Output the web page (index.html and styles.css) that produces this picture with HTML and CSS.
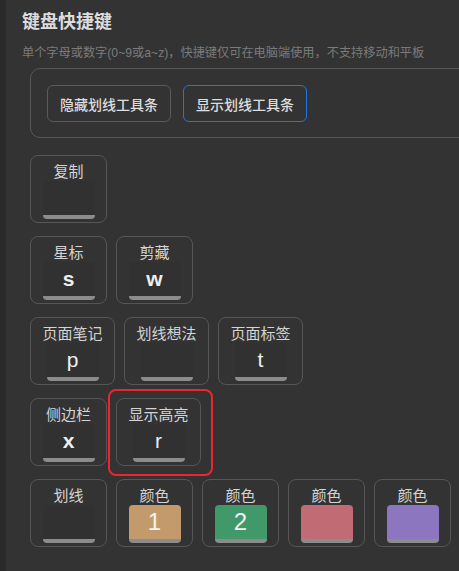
FILE: index.html
```html
<!DOCTYPE html>
<html lang="zh-CN">
<head>
  <meta charset="UTF-8">
  <meta name="viewport" content="width=device-width, initial-scale=1.0">
  <title>键盘快捷键</title>
  <link rel="stylesheet" href="styles.css">
</head>
<body>
  <div class="panel">
    <h2 class="title">键盘快捷键</h2>
    <p class="desc">单个字母或数字(0~9或a~z)，快捷键仅可在电脑端使用，不支持移动和平板</p>

    <div class="toolbar-box">
      <button class="toggle">隐藏划线工具条</button>
      <button class="toggle active">显示划线工具条</button>
    </div>

    <div class="rows">
      <div class="row">
        <div class="key-card">
          <span class="label">复制</span>
          <span class="keycap"></span>
        </div>
      </div>
      <div class="row">
        <div class="key-card">
          <span class="label">星标</span>
          <span class="keycap bold">s</span>
        </div>
        <div class="key-card">
          <span class="label">剪藏</span>
          <span class="keycap bold">w</span>
        </div>
      </div>
      <div class="row">
        <div class="key-card">
          <span class="label">页面笔记</span>
          <span class="keycap">p</span>
        </div>
        <div class="key-card">
          <span class="label">划线想法</span>
          <span class="keycap"></span>
        </div>
        <div class="key-card">
          <span class="label">页面标签</span>
          <span class="keycap">t</span>
        </div>
      </div>
      <div class="row">
        <div class="key-card">
          <span class="label">侧边栏</span>
          <span class="keycap bold">x</span>
        </div>
        <div class="key-card marked">
          <span class="label">显示高亮</span>
          <span class="keycap">r</span>
        </div>
      </div>
      <div class="row">
        <div class="key-card">
          <span class="label">划线</span>
          <span class="keycap"></span>
        </div>
        <div class="key-card">
          <span class="label">颜色</span>
          <span class="keycap color tan">1</span>
        </div>
        <div class="key-card">
          <span class="label">颜色</span>
          <span class="keycap color green">2</span>
        </div>
        <div class="key-card">
          <span class="label">颜色</span>
          <span class="keycap color rose"></span>
        </div>
        <div class="key-card">
          <span class="label">颜色</span>
          <span class="keycap color purple"></span>
        </div>
      </div>
    </div>
  </div>
</body>
</html>
```

FILE: styles.css
```css
*{
  margin: 0;
  padding: 0;
  box-sizing: border-box;
}
html, body{
  height: 100%;
}
body{
  background-color: #333333;
  border-left: 6px solid #2a2a2a;
  overflow: hidden;
  font-family: "Liberation Sans", "Noto Sans CJK SC", sans-serif;
  color: #d6d6d6;
}
.panel{
  padding: 10px 0 0 16px;
}
.title{
  font-size: 18px;
  line-height: 25px;
  font-weight: bold;
  color: #dcdcdc;
}
.desc{
  margin-top: 9px;
  font-size: 12.2px;
  line-height: 18px;
  color: #7b7b7b;
  white-space: nowrap;
}
.toolbar-box{
  display: flex;
  gap: 12px;
  width: 460px;
  margin: 6px 0 0 8px;
  padding: 16px 16px 15px;
  border: 1px solid #575757;
  border-radius: 10px;
}
.toggle{
  height: 37px;
  padding: 0 12px;
  border: 1px solid #5a5a5a;
  border-radius: 6px;
  background-color: transparent;
  color: #dedede;
  font-family: inherit;
  font-size: 14px;
  font-weight: 500;
}
.toggle.active{
  border-color: #1a78e6;
}
.rows{
  display: flex;
  flex-direction: column;
  gap: 13px;
  margin: 17px 0 0 8px;
}
.row{
  display: flex;
  gap: 9px;
}
.key-card{
  position: relative;
  display: flex;
  flex-direction: column;
  align-items: center;
  padding: 6px 11.5px 3px;
  border: 1px solid #565656;
  border-radius: 8px;
}
.label{
  font-size: 15px;
  line-height: 19px;
  color: #d4d4d4;
  white-space: nowrap;
}
.keycap{
  display: flex;
  align-items: center;
  justify-content: center;
  width: 52px;
  height: 38px;
  background-color: #313131;
  border-bottom: 4px solid #8c8c8c;
  border-radius: 4px;
  font-size: 21px;
  color: #eeeeee;
}
.keycap.bold{
  font-weight: bold;
}
.keycap.color{
  font-size: 24px;
  color: #f2f2f2;
}
.tan{ background-color: #c39a6b; }
.green{ background-color: #41996a; }
.rose{ background-color: #c16b75; }
.purple{ background-color: #8b76bf; }

/* 红框标注 */
.marked::after{
  content: '';
  position: absolute;
  top: -10px;
  bottom: -11px;
  left: -9px;
  right: -13px;
  border: 2.5px solid #ee262b;
  border-radius: 8px;
}
```
